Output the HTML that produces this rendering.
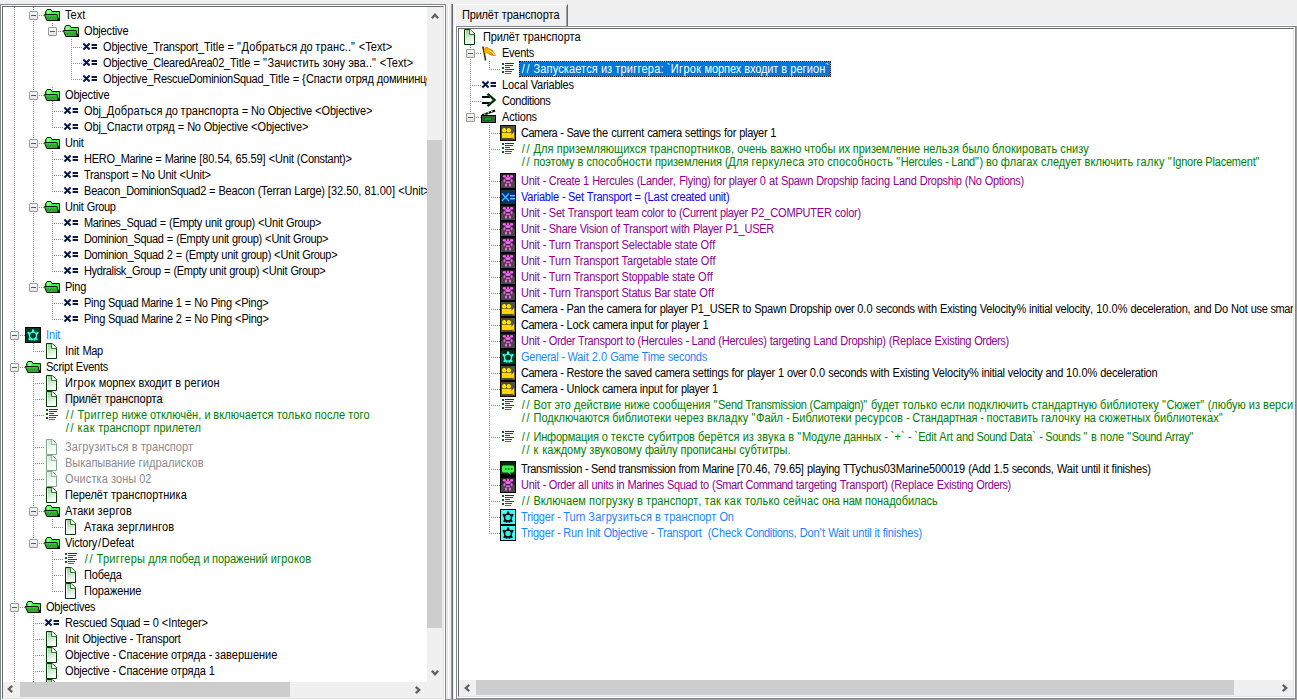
<!DOCTYPE html><html><head><meta charset="utf-8"><style>
*{margin:0;padding:0;box-sizing:border-box}
html,body{width:1297px;height:700px;overflow:hidden;background:#f0f0f0;font-family:"Liberation Sans",sans-serif;font-size:11px}
.abs{position:absolute}
.clip{position:absolute;overflow:hidden;background:#fff}
.ic{position:absolute;width:16px;height:16px}
.t{position:absolute;white-space:pre;line-height:16px;height:16px;font-size:12px;transform:scaleX(0.916667);transform-origin:0 0}
.t2{line-height:13px;height:32px;padding-top:2px}
.sel{color:#fff}
.selbg{position:absolute;background:#0078d7;border:1px solid #ff8a2a}
.selbg i{position:absolute;left:-1px;top:-1px;right:-1px;bottom:-1px;border:1px dotted #000}
.exp{position:absolute;width:9px;height:9px;border:1px solid #9a9a9a;border-radius:1px;background:linear-gradient(#fdfdfd,#e4e4e4)}
.exp i{position:absolute;left:1px;top:3px;width:5px;height:1px;background:#3c5cb4}
.dots{position:absolute;left:0;top:0}
.sb{position:absolute;background:#f0f0f0}
.thumb{position:absolute;background:#cdcdcd}
.arr{position:absolute;width:8px;height:8px}
</style></head><body><svg width="0" height="0" style="position:absolute"><defs><pattern id="pv" width="1" height="2" patternUnits="userSpaceOnUse"><rect x="0" y="1" width="1" height="1" fill="#8c8c8c"/></pattern><pattern id="ph0" width="2" height="1" patternUnits="userSpaceOnUse"><rect x="0" y="0" width="1" height="1" fill="#8c8c8c"/></pattern><pattern id="ph1" width="2" height="1" patternUnits="userSpaceOnUse"><rect x="1" y="0" width="1" height="1" fill="#8c8c8c"/></pattern></defs>
<symbol id="i-folder" viewBox="0 0 16 16">
  <path d="M1.5 5 L3 2.5 L7 2.5 L8 4.5 L15.5 4.5 L15.5 13.5 L3 13.5 Z" fill="#44f044" stroke="#002a00" stroke-width="1"/>
  <rect x="3" y="3" width="3.5" height="4" fill="#8cfa8c"/>
  <path d="M0.3 7.5 L13 7.5 L14.5 13.5 L2.8 13.5 Z" fill="#28a828" stroke="#001800" stroke-width="1"/>
  <rect x="1.5" y="8.2" width="11" height="1.2" fill="#4cc84c"/>
  <rect x="3.5" y="12.2" width="9" height="0.8" fill="#5a9a5a"/>
  <path d="M14 11.5 L16 11 L16 14 L13.5 14 Z" fill="#000"/>
</symbol>
<symbol id="i-var" viewBox="0 0 16 16">
  <path d="M1.4 4.6 L7.6 10.4 M7.6 4.6 L1.4 10.4" stroke="#0a1848" stroke-width="2.1"/>
  <rect x="9.6" y="5" width="5.4" height="2" fill="#0a1848"/>
  <rect x="9.6" y="8" width="5.4" height="2" fill="#0a1848"/>
</symbol>
<symbol id="i-doc" viewBox="0 0 16 16">
  <defs><linearGradient id="gdoc" x1="0" y1="0" x2="0.3" y2="1"><stop offset="0" stop-color="#8cc98c"/><stop offset="0.55" stop-color="#cfe8cf"/><stop offset="1" stop-color="#ffffff"/></linearGradient></defs>
  <path d="M2.5 0.5 L8.5 0.5 L12.5 4.5 L12.5 15.5 L2.5 15.5 Z" fill="url(#gdoc)" stroke="#003800" stroke-width="1"/>
  <path d="M3.5 1.5 L3.5 14.5 L11.5 14.5" fill="none" stroke="#fff" stroke-width="1"/>
  <path d="M8 1 L12 5 L8 5 Z" fill="#fff"/>
  <path d="M7.5 0.5 L7.5 5.5 L12.5 5.5" fill="none" stroke="#2a7f2a" stroke-width="1"/>
  <path d="M8.5 0.5 L12.5 4.5" fill="none" stroke="#fff" stroke-width="0.6" stroke-dasharray="0.7 0.7"/>
</symbol>
<symbol id="i-doc-dis" viewBox="0 0 16 16">
  <defs><linearGradient id="gdocd" x1="0" y1="0" x2="0.3" y2="1"><stop offset="0" stop-color="#cfe9d2"/><stop offset="1" stop-color="#ffffff"/></linearGradient></defs>
  <path d="M2.5 0.5 L8.5 0.5 L12.5 4.5 L12.5 15.5 L2.5 15.5 Z" fill="url(#gdocd)" stroke="#7ea68a" stroke-width="1"/>
  <path d="M3.5 1.5 L3.5 14.5 L11.5 14.5" fill="none" stroke="#fff" stroke-width="1"/>
  <path d="M8 1 L12 5 L8 5 Z" fill="#fff"/>
  <path d="M7.5 0.5 L7.5 5.5 L12.5 5.5" fill="none" stroke="#8cb498" stroke-width="1"/>
</symbol>
<symbol id="i-comment" viewBox="0 0 16 16">
  <rect x="2" y="2" width="2" height="2" fill="#0b5e0b"/>
  <rect x="2" y="6" width="2" height="2" fill="#0b5e0b"/>
  <rect x="2" y="10" width="2" height="2" fill="#0b5e0b"/>
  <rect x="5" y="2" width="9" height="1" fill="#064d06"/>
  <rect x="5" y="4" width="8" height="1" fill="#0a6a0a"/>
  <rect x="5" y="6" width="5" height="1" fill="#0a6a0a"/>
  <rect x="5" y="8" width="9" height="1" fill="#0a6a0a"/>
  <rect x="5" y="10" width="7" height="1" fill="#0d7a0d"/>
  <rect x="5" y="12" width="6" height="1" fill="#22a022"/>
</symbol>
<symbol id="i-init" viewBox="0 0 16 16">
  <rect x="0.5" y="0.5" width="15" height="15" fill="#073d1d" stroke="#000" stroke-width="1"/>
  <g fill="#40fbf4"><rect x="7" y="2.5" width="2.2" height="3"/>
    <path d="M2.2 5.6 L4.2 4.6 L5.6 7.2 L4 8.2 Z"/><path d="M13.8 5.6 L11.8 4.6 L10.4 7.2 L12 8.2 Z"/>
    <path d="M3 12.3 L5.2 13.6 L6.6 11.2 L4.8 10.2 Z"/><path d="M13 12.3 L10.8 13.6 L9.4 11.2 L11.2 10.2 Z"/>
    <rect x="6" y="12" width="1.5" height="1.6"/><rect x="8.5" y="12" width="1.5" height="1.6"/></g>
  <circle cx="8" cy="8.6" r="3.5" fill="#063a12" stroke="#40fbf4" stroke-width="1.4"/>
</symbol>
<symbol id="i-general" viewBox="0 0 16 16">
  <rect x="0.5" y="0.5" width="15" height="15" fill="#063d1f" stroke="#000" stroke-width="1"/>
  <rect x="1" y="1" width="14" height="3" fill="#052a12"/>
  <g fill="#40fbf4"><rect x="7" y="2.5" width="2.2" height="3"/>
    <path d="M2.2 5.6 L4.2 4.6 L5.6 7.2 L4 8.2 Z"/><path d="M13.8 5.6 L11.8 4.6 L10.4 7.2 L12 8.2 Z"/>
    <path d="M3 12.3 L5.2 13.6 L6.6 11.2 L4.8 10.2 Z"/><path d="M13 12.3 L10.8 13.6 L9.4 11.2 L11.2 10.2 Z"/>
    <rect x="6" y="12" width="1.5" height="1.6"/><rect x="8.5" y="12" width="1.5" height="1.6"/></g>
  <circle cx="8" cy="8.6" r="3.5" fill="#063a12" stroke="#40fbf4" stroke-width="1.4"/>
</symbol>
<symbol id="i-trigger" viewBox="0 0 16 16">
  <rect x="0.5" y="0.5" width="15" height="15" fill="#42fcf6" stroke="#000" stroke-width="1"/>
  <g fill="#000"><rect x="7" y="2.5" width="2.2" height="3"/>
    <path d="M2.2 5.6 L4.2 4.6 L5.6 7.2 L4 8.2 Z"/><path d="M13.8 5.6 L11.8 4.6 L10.4 7.2 L12 8.2 Z"/>
    <path d="M3 12.3 L5.2 13.6 L6.6 11.2 L4.8 10.2 Z"/><path d="M13 12.3 L10.8 13.6 L9.4 11.2 L11.2 10.2 Z"/>
    <rect x="6" y="12" width="1.5" height="1.6"/><rect x="8.5" y="12" width="1.5" height="1.6"/></g>
  <circle cx="8" cy="8.6" r="3.5" fill="#3ee6e0" stroke="#000" stroke-width="1.5"/>
</symbol>
<symbol id="i-flag" viewBox="0 0 16 16">
  <path d="M1.8 1.5 L2.6 5 L3.6 10 L4.6 15.5" stroke="#3a2200" stroke-width="1.5" fill="none"/>
  <path d="M2.6 3 L4.5 2.2 L7 2.4 L9 3.6 L11 5 L12.5 6 L12 7 L13.5 8.5 L15 10.5 L12.5 11 L10 10.3 L8 9.2 L6 8.6 L3.8 8.8 Z" fill="#f4b400"/>
  <path d="M8.2 3.4 L11 5 L12.5 6 L12 7 L13.5 8.5 L15 10.5 L12.5 11 L10 10.3 L8 9.2 L9 7 Z" fill="#e8860c"/>
  <path d="M8.5 5.5 L11.5 7.6 L13.5 10" stroke="#ffe9a0" stroke-width="1.1" fill="none"/>
  <path d="M4 3 L7 2.6" stroke="#d07010" stroke-width="0.8"/>
</symbol>
<symbol id="i-cond" viewBox="0 0 16 16">
  <rect x="1" y="3" width="8" height="2" fill="#000"/>
  <rect x="1" y="9" width="8" height="2" fill="#000"/>
  <path d="M6.5 0.8 L13.5 7 L6.5 13.2" fill="none" stroke="#062e06" stroke-width="2.4"/>
  <path d="M7.5 2.6 L11.6 7 L7.5 11.4" fill="none" stroke="#8fe08f" stroke-width="0.8" stroke-dasharray="1 1"/>
</symbol>
<symbol id="i-actions" viewBox="0 0 16 16">
  <path d="M1.2 6.2 L14 1.5" stroke="#000" stroke-width="2.2"/>
  <path d="M3.2 5.4 L4.6 4.9 M6.6 4.2 L8 3.7 M10 2.9 L11.4 2.4" stroke="#c8f8c8" stroke-width="1.3"/>
  <rect x="0.5" y="6.5" width="14" height="7" fill="#435a43" stroke="#000" stroke-width="1"/>
  <rect x="3" y="8" width="8" height="4" fill="#0b6e0b"/>
  <rect x="4" y="9" width="6" height="2" fill="#16a016"/>
</symbol>
<symbol id="i-camera" viewBox="0 0 16 16">
  <rect x="0.5" y="0.5" width="15" height="15" fill="#4b4a2a" stroke="#000010" stroke-width="1"/>
  <rect x="11" y="1" width="4" height="7" fill="#50505a"/>
  <circle cx="4.2" cy="5.3" r="2.2" fill="#ffe400"/>
  <circle cx="8.8" cy="5.3" r="2.2" fill="#ffe400"/>
  <rect x="2" y="7.8" width="9.5" height="5.2" fill="#ffd800"/>
  <path d="M11 10 L14.2 7 L14.2 14 L11 12.5 Z" fill="#ffd800"/>
  <path d="M12 12.5 L14.2 12 L14.2 14 Z" fill="#ff9800"/>
</symbol>
<symbol id="i-unit" viewBox="0 0 16 16">
  <rect x="0.5" y="0.5" width="15" height="15" fill="#2e242e" stroke="#000" stroke-width="1"/>
  <rect x="1" y="8" width="14" height="7" fill="#484648"/>
  <g fill="#f06af0">
    <ellipse cx="8" cy="3.1" rx="1.2" ry="1.3"/>
    <ellipse cx="4.4" cy="3.3" rx="1.5" ry="1.4"/><ellipse cx="11.6" cy="3.3" rx="1.5" ry="1.4"/>
    <path d="M5 4.3 L11 4.3 L10.2 7 L5.8 7 Z"/>
    <ellipse cx="4.3" cy="7.5" rx="1" ry="1.6"/><ellipse cx="11.7" cy="7.5" rx="1" ry="1.6"/>
    <path d="M5.8 8.4 L10.2 8.4 L9.6 10 L6.4 10 Z"/>
    <rect x="5" y="10.6" width="2" height="3" rx="0.9"/><rect x="9" y="10.6" width="2" height="3" rx="0.9"/>
  </g>
</symbol>
<symbol id="i-setvar" viewBox="0 0 16 16">
  <rect x="0.5" y="0.5" width="15" height="15" fill="#0b3550" stroke="#000" stroke-width="1"/>
  <rect x="1" y="4" width="14" height="8" fill="#0a2e90"/>
  <path d="M2 4.5 L9 12 M9 4.5 L2 12" stroke="#48c0ff" stroke-width="1.2"/>
  <rect x="10" y="6" width="5" height="1.4" fill="#60d0ff"/>
  <rect x="10" y="9" width="5" height="1.4" fill="#60d0ff"/>
</symbol>
<symbol id="i-transm" viewBox="0 0 16 16">
  <rect x="0.5" y="0.5" width="15" height="15" fill="#063d10" stroke="#000" stroke-width="1"/>
  <rect x="1" y="1" width="14" height="3" fill="#032a08"/>
  <rect x="1" y="13" width="14" height="2" fill="#000a00"/>
  <path d="M3 4.5 L13 4.5 L14 5.5 L14 10.5 L13 11.5 L10 11.5 L11 14 L8 11.5 L3 11.5 L2 10.5 L2 5.5 Z" fill="#3ef24c"/>
  <rect x="5" y="7.3" width="1.4" height="1.4" fill="#063d10"/>
  <rect x="8" y="7.3" width="1.4" height="1.4" fill="#063d10"/>
  <rect x="11" y="7.3" width="1.4" height="1.4" fill="#063d10"/>
</symbol>
</svg><div class="abs" style="left:0;top:4px;width:446px;height:697px;border:1px solid #828790"></div><div class="abs" style="left:1px;top:5px;width:444px;height:695px;border:1px solid #fff"></div><div class="abs" style="left:2px;top:6px;width:442px;height:693px;border-left:1px solid #696969;border-top:1px solid #696969;border-right:1px solid #e3e3e3;border-bottom:1px solid #e3e3e3"></div><div class="clip" style="left:3px;top:7px;width:424px;height:675px"><div class="abs" style="left:-3px;top:-7px;width:1297px;height:700px"><svg class="dots" width="1297" height="700"><g fill="url(#pv)"><rect x="14" y="7" width="1" height="691"/><rect x="33" y="7" width="1" height="281"/><rect x="33" y="343" width="1" height="9"/><rect x="33" y="375" width="1" height="169"/><rect x="33" y="615" width="1" height="83"/><rect x="52" y="23" width="1" height="9"/><rect x="52" y="87" width="1" height="41"/><rect x="52" y="151" width="1" height="41"/><rect x="52" y="215" width="1" height="57"/><rect x="52" y="295" width="1" height="25"/><rect x="52" y="519" width="1" height="9"/><rect x="52" y="551" width="1" height="41"/><rect x="71" y="39" width="1" height="41"/></g><g fill="url(#ph0)"><rect x="52" y="31" width="11" height="1"/><rect x="52" y="111" width="11" height="1"/><rect x="52" y="127" width="11" height="1"/><rect x="52" y="159" width="11" height="1"/><rect x="52" y="175" width="11" height="1"/><rect x="52" y="191" width="11" height="1"/><rect x="52" y="223" width="11" height="1"/><rect x="52" y="239" width="11" height="1"/><rect x="52" y="255" width="11" height="1"/><rect x="52" y="271" width="11" height="1"/><rect x="52" y="303" width="11" height="1"/><rect x="52" y="319" width="11" height="1"/><rect x="14" y="335" width="11" height="1"/><rect x="14" y="367" width="11" height="1"/><rect x="52" y="527" width="11" height="1"/><rect x="52" y="559" width="11" height="1"/><rect x="52" y="575" width="11" height="1"/><rect x="52" y="591" width="11" height="1"/><rect x="14" y="607" width="11" height="1"/></g><g fill="url(#ph1)"><rect x="33" y="15" width="11" height="1"/><rect x="71" y="47" width="11" height="1"/><rect x="71" y="63" width="11" height="1"/><rect x="71" y="79" width="11" height="1"/><rect x="33" y="95" width="11" height="1"/><rect x="33" y="143" width="11" height="1"/><rect x="33" y="207" width="11" height="1"/><rect x="33" y="287" width="11" height="1"/><rect x="33" y="351" width="11" height="1"/><rect x="33" y="383" width="11" height="1"/><rect x="33" y="399" width="11" height="1"/><rect x="33" y="415" width="11" height="1"/><rect x="33" y="447" width="11" height="1"/><rect x="33" y="463" width="11" height="1"/><rect x="33" y="479" width="11" height="1"/><rect x="33" y="495" width="11" height="1"/><rect x="33" y="511" width="11" height="1"/><rect x="33" y="543" width="11" height="1"/><rect x="33" y="623" width="11" height="1"/><rect x="33" y="639" width="11" height="1"/><rect x="33" y="655" width="11" height="1"/><rect x="33" y="671" width="11" height="1"/><rect x="33" y="687" width="11" height="1"/></g></svg><div class="abs" style="left:63px;top:391px;width:102px;height:16px;background:#f0f0f0"></div><div class="exp" style="left:29px;top:11px"><i></i></div><svg class="ic" style="left:44px;top:7px"><use href="#i-folder"/></svg><div class="t" style="left:65px;top:7px;color:#000000"><span style="letter-spacing:0.09px">Text</span></div><div class="exp" style="left:48px;top:27px"><i></i></div><svg class="ic" style="left:63px;top:23px"><use href="#i-folder"/></svg><div class="t" style="left:84px;top:23px;color:#000000"><span style="letter-spacing:-0.18px">Objective</span></div><svg class="ic" style="left:82px;top:39px"><use href="#i-var"/></svg><div class="t" style="left:103px;top:39px;color:#000000"><span style="letter-spacing:-0.18px">Objective</span><span style="letter-spacing:-0.13px">_</span><span style="letter-spacing:-0.24px">Transport</span><span style="letter-spacing:-0.13px">_</span><span style="letter-spacing:0.00px">Title</span><span style="letter-spacing:-0.02px"> </span><span style="letter-spacing:-0.03px">=</span><span style="letter-spacing:-0.02px"> </span><span style="letter-spacing:0.71px">&quot;</span><span style="letter-spacing:0.19px">Добраться</span><span style="letter-spacing:-0.02px"> </span><span style="letter-spacing:-0.32px">до</span><span style="letter-spacing:-0.02px"> </span><span style="letter-spacing:0.12px">транс</span><span style="letter-spacing:0.11px">..</span><span style="letter-spacing:0.71px">&quot;</span><span style="letter-spacing:-0.02px"> </span><span style="letter-spacing:0.01px">&lt;</span><span style="letter-spacing:0.09px">Text</span><span style="letter-spacing:0.01px">&gt;</span></div><svg class="ic" style="left:82px;top:55px"><use href="#i-var"/></svg><div class="t" style="left:103px;top:55px;color:#000000"><span style="letter-spacing:-0.18px">Objective</span><span style="letter-spacing:-0.13px">_</span><span style="letter-spacing:-0.28px">ClearedArea02</span><span style="letter-spacing:-0.13px">_</span><span style="letter-spacing:0.00px">Title</span><span style="letter-spacing:-0.02px"> </span><span style="letter-spacing:-0.03px">=</span><span style="letter-spacing:-0.02px"> </span><span style="letter-spacing:0.71px">&quot;</span><span style="letter-spacing:0.01px">Зачистить</span><span style="letter-spacing:-0.02px"> </span><span style="letter-spacing:-0.00px">зону</span><span style="letter-spacing:-0.02px"> </span><span style="letter-spacing:0.07px">эва</span><span style="letter-spacing:0.11px">..</span><span style="letter-spacing:0.71px">&quot;</span><span style="letter-spacing:-0.02px"> </span><span style="letter-spacing:0.01px">&lt;</span><span style="letter-spacing:0.09px">Text</span><span style="letter-spacing:0.01px">&gt;</span></div><svg class="ic" style="left:82px;top:71px"><use href="#i-var"/></svg><div class="t" style="left:103px;top:71px;color:#000000"><span style="letter-spacing:-0.18px">Objective</span><span style="letter-spacing:-0.13px">_</span><span style="letter-spacing:-0.33px">RescueDominionSquad</span><span style="letter-spacing:-0.13px">_</span><span style="letter-spacing:0.00px">Title</span><span style="letter-spacing:-0.02px"> </span><span style="letter-spacing:-0.03px">=</span><span style="letter-spacing:-0.02px"> </span><span style="letter-spacing:0.13px">{</span><span style="letter-spacing:-0.12px">Спасти</span><span style="letter-spacing:-0.02px"> </span><span style="letter-spacing:-0.11px">отряд</span><span style="letter-spacing:-0.02px"> </span><span style="letter-spacing:-0.21px">домининцев</span><span style="letter-spacing:0.13px">}</span></div><div class="exp" style="left:29px;top:91px"><i></i></div><svg class="ic" style="left:44px;top:87px"><use href="#i-folder"/></svg><div class="t" style="left:65px;top:87px;color:#000000"><span style="letter-spacing:-0.18px">Objective</span></div><svg class="ic" style="left:63px;top:103px"><use href="#i-var"/></svg><div class="t" style="left:84px;top:103px;color:#000000"><span style="letter-spacing:-0.14px">Obj</span><span style="letter-spacing:-0.13px">_</span><span style="letter-spacing:0.19px">Добраться</span><span style="letter-spacing:-0.02px"> </span><span style="letter-spacing:-0.32px">до</span><span style="letter-spacing:-0.02px"> </span><span style="letter-spacing:0.02px">транспорта</span><span style="letter-spacing:-0.02px"> </span><span style="letter-spacing:-0.03px">=</span><span style="letter-spacing:-0.02px"> </span><span style="letter-spacing:-0.33px">No</span><span style="letter-spacing:-0.02px"> </span><span style="letter-spacing:-0.18px">Objective</span><span style="letter-spacing:-0.02px"> </span><span style="letter-spacing:0.01px">&lt;</span><span style="letter-spacing:-0.18px">Objective</span><span style="letter-spacing:0.01px">&gt;</span></div><svg class="ic" style="left:63px;top:119px"><use href="#i-var"/></svg><div class="t" style="left:84px;top:119px;color:#000000"><span style="letter-spacing:-0.14px">Obj</span><span style="letter-spacing:-0.13px">_</span><span style="letter-spacing:-0.12px">Спасти</span><span style="letter-spacing:-0.02px"> </span><span style="letter-spacing:-0.11px">отряд</span><span style="letter-spacing:-0.02px"> </span><span style="letter-spacing:-0.03px">=</span><span style="letter-spacing:-0.02px"> </span><span style="letter-spacing:-0.33px">No</span><span style="letter-spacing:-0.02px"> </span><span style="letter-spacing:-0.18px">Objective</span><span style="letter-spacing:-0.02px"> </span><span style="letter-spacing:0.01px">&lt;</span><span style="letter-spacing:-0.18px">Objective</span><span style="letter-spacing:0.01px">&gt;</span></div><div class="exp" style="left:29px;top:139px"><i></i></div><svg class="ic" style="left:44px;top:135px"><use href="#i-folder"/></svg><div class="t" style="left:65px;top:135px;color:#000000"><span style="letter-spacing:-0.25px">Unit</span></div><svg class="ic" style="left:63px;top:151px"><use href="#i-var"/></svg><div class="t" style="left:84px;top:151px;color:#000000"><span style="letter-spacing:-0.28px">HERO</span><span style="letter-spacing:-0.13px">_</span><span style="letter-spacing:-0.40px">Marine</span><span style="letter-spacing:-0.02px"> </span><span style="letter-spacing:-0.03px">=</span><span style="letter-spacing:-0.02px"> </span><span style="letter-spacing:-0.40px">Marine</span><span style="letter-spacing:-0.02px"> </span><span style="letter-spacing:0.06px">[</span><span style="letter-spacing:-0.11px">80</span><span style="letter-spacing:0.11px">.</span><span style="letter-spacing:-0.24px">54</span><span style="letter-spacing:0.18px">,</span><span style="letter-spacing:-0.02px"> </span><span style="letter-spacing:-0.21px">65</span><span style="letter-spacing:0.11px">.</span><span style="letter-spacing:-0.21px">59</span><span style="letter-spacing:0.06px">]</span><span style="letter-spacing:-0.02px"> </span><span style="letter-spacing:0.01px">&lt;</span><span style="letter-spacing:-0.25px">Unit</span><span style="letter-spacing:-0.02px"> </span><span style="letter-spacing:-0.26px">(</span><span style="letter-spacing:-0.30px">Constant</span><span style="letter-spacing:-0.13px">)&gt;</span></div><svg class="ic" style="left:63px;top:167px"><use href="#i-var"/></svg><div class="t" style="left:84px;top:167px;color:#000000"><span style="letter-spacing:-0.24px">Transport</span><span style="letter-spacing:-0.02px"> </span><span style="letter-spacing:-0.03px">=</span><span style="letter-spacing:-0.02px"> </span><span style="letter-spacing:-0.33px">No</span><span style="letter-spacing:-0.02px"> </span><span style="letter-spacing:-0.25px">Unit</span><span style="letter-spacing:-0.02px"> </span><span style="letter-spacing:0.01px">&lt;</span><span style="letter-spacing:-0.25px">Unit</span><span style="letter-spacing:0.01px">&gt;</span></div><svg class="ic" style="left:63px;top:183px"><use href="#i-var"/></svg><div class="t" style="left:84px;top:183px;color:#000000"><span style="letter-spacing:-0.21px">Beacon</span><span style="letter-spacing:-0.13px">_</span><span style="letter-spacing:-0.36px">DominionSquad2</span><span style="letter-spacing:-0.02px"> </span><span style="letter-spacing:-0.03px">=</span><span style="letter-spacing:-0.02px"> </span><span style="letter-spacing:-0.21px">Beacon</span><span style="letter-spacing:-0.02px"> </span><span style="letter-spacing:-0.26px">(</span><span style="letter-spacing:-0.18px">Terran</span><span style="letter-spacing:-0.02px"> </span><span style="letter-spacing:-0.25px">Large</span><span style="letter-spacing:-0.26px">)</span><span style="letter-spacing:-0.02px"> </span><span style="letter-spacing:0.06px">[</span><span style="letter-spacing:-0.01px">32</span><span style="letter-spacing:0.11px">.</span><span style="letter-spacing:-0.15px">50</span><span style="letter-spacing:0.18px">,</span><span style="letter-spacing:-0.02px"> </span><span style="letter-spacing:-0.17px">81</span><span style="letter-spacing:0.11px">.</span><span style="letter-spacing:0.02px">00</span><span style="letter-spacing:0.06px">]</span><span style="letter-spacing:-0.02px"> </span><span style="letter-spacing:0.01px">&lt;</span><span style="letter-spacing:-0.25px">Unit</span><span style="letter-spacing:0.01px">&gt;</span></div><div class="exp" style="left:29px;top:203px"><i></i></div><svg class="ic" style="left:44px;top:199px"><use href="#i-folder"/></svg><div class="t" style="left:65px;top:199px;color:#000000"><span style="letter-spacing:-0.25px">Unit</span><span style="letter-spacing:-0.02px"> </span><span style="letter-spacing:-0.37px">Group</span></div><svg class="ic" style="left:63px;top:215px"><use href="#i-var"/></svg><div class="t" style="left:84px;top:215px;color:#000000"><span style="letter-spacing:-0.41px">Marines</span><span style="letter-spacing:-0.13px">_</span><span style="letter-spacing:-0.38px">Squad</span><span style="letter-spacing:-0.02px"> </span><span style="letter-spacing:-0.03px">=</span><span style="letter-spacing:-0.02px"> </span><span style="letter-spacing:-0.26px">(</span><span style="letter-spacing:-0.37px">Empty</span><span style="letter-spacing:-0.02px"> </span><span style="letter-spacing:-0.24px">unit</span><span style="letter-spacing:-0.02px"> </span><span style="letter-spacing:-0.37px">group</span><span style="letter-spacing:-0.26px">)</span><span style="letter-spacing:-0.02px"> </span><span style="letter-spacing:0.01px">&lt;</span><span style="letter-spacing:-0.25px">Unit</span><span style="letter-spacing:-0.02px"> </span><span style="letter-spacing:-0.37px">Group</span><span style="letter-spacing:0.01px">&gt;</span></div><svg class="ic" style="left:63px;top:231px"><use href="#i-var"/></svg><div class="t" style="left:84px;top:231px;color:#000000"><span style="letter-spacing:-0.40px">Dominion</span><span style="letter-spacing:-0.13px">_</span><span style="letter-spacing:-0.38px">Squad</span><span style="letter-spacing:-0.02px"> </span><span style="letter-spacing:-0.03px">=</span><span style="letter-spacing:-0.02px"> </span><span style="letter-spacing:-0.26px">(</span><span style="letter-spacing:-0.37px">Empty</span><span style="letter-spacing:-0.02px"> </span><span style="letter-spacing:-0.24px">unit</span><span style="letter-spacing:-0.02px"> </span><span style="letter-spacing:-0.37px">group</span><span style="letter-spacing:-0.26px">)</span><span style="letter-spacing:-0.02px"> </span><span style="letter-spacing:0.01px">&lt;</span><span style="letter-spacing:-0.25px">Unit</span><span style="letter-spacing:-0.02px"> </span><span style="letter-spacing:-0.37px">Group</span><span style="letter-spacing:0.01px">&gt;</span></div><svg class="ic" style="left:63px;top:247px"><use href="#i-var"/></svg><div class="t" style="left:84px;top:247px;color:#000000"><span style="letter-spacing:-0.40px">Dominion</span><span style="letter-spacing:-0.13px">_</span><span style="letter-spacing:-0.38px">Squad</span><span style="letter-spacing:-0.02px"> </span><span style="letter-spacing:0.01px">2</span><span style="letter-spacing:-0.02px"> </span><span style="letter-spacing:-0.03px">=</span><span style="letter-spacing:-0.02px"> </span><span style="letter-spacing:-0.26px">(</span><span style="letter-spacing:-0.37px">Empty</span><span style="letter-spacing:-0.02px"> </span><span style="letter-spacing:-0.24px">unit</span><span style="letter-spacing:-0.02px"> </span><span style="letter-spacing:-0.37px">group</span><span style="letter-spacing:-0.26px">)</span><span style="letter-spacing:-0.02px"> </span><span style="letter-spacing:0.01px">&lt;</span><span style="letter-spacing:-0.25px">Unit</span><span style="letter-spacing:-0.02px"> </span><span style="letter-spacing:-0.37px">Group</span><span style="letter-spacing:0.01px">&gt;</span></div><svg class="ic" style="left:63px;top:263px"><use href="#i-var"/></svg><div class="t" style="left:84px;top:263px;color:#000000"><span style="letter-spacing:-0.39px">Hydralisk</span><span style="letter-spacing:-0.13px">_</span><span style="letter-spacing:-0.37px">Group</span><span style="letter-spacing:-0.02px"> </span><span style="letter-spacing:-0.03px">=</span><span style="letter-spacing:-0.02px"> </span><span style="letter-spacing:-0.26px">(</span><span style="letter-spacing:-0.37px">Empty</span><span style="letter-spacing:-0.02px"> </span><span style="letter-spacing:-0.24px">unit</span><span style="letter-spacing:-0.02px"> </span><span style="letter-spacing:-0.37px">group</span><span style="letter-spacing:-0.26px">)</span><span style="letter-spacing:-0.02px"> </span><span style="letter-spacing:0.01px">&lt;</span><span style="letter-spacing:-0.25px">Unit</span><span style="letter-spacing:-0.02px"> </span><span style="letter-spacing:-0.37px">Group</span><span style="letter-spacing:0.01px">&gt;</span></div><div class="exp" style="left:29px;top:283px"><i></i></div><svg class="ic" style="left:44px;top:279px"><use href="#i-folder"/></svg><div class="t" style="left:65px;top:279px;color:#000000"><span style="letter-spacing:-0.27px">Ping</span></div><svg class="ic" style="left:63px;top:295px"><use href="#i-var"/></svg><div class="t" style="left:84px;top:295px;color:#000000"><span style="letter-spacing:-0.27px">Ping</span><span style="letter-spacing:-0.02px"> </span><span style="letter-spacing:-0.38px">Squad</span><span style="letter-spacing:-0.02px"> </span><span style="letter-spacing:-0.40px">Marine</span><span style="letter-spacing:-0.02px"> </span><span style="letter-spacing:-0.11px">1</span><span style="letter-spacing:-0.02px"> </span><span style="letter-spacing:-0.03px">=</span><span style="letter-spacing:-0.02px"> </span><span style="letter-spacing:-0.33px">No</span><span style="letter-spacing:-0.02px"> </span><span style="letter-spacing:-0.27px">Ping</span><span style="letter-spacing:-0.02px"> </span><span style="letter-spacing:0.01px">&lt;</span><span style="letter-spacing:-0.27px">Ping</span><span style="letter-spacing:0.01px">&gt;</span></div><svg class="ic" style="left:63px;top:311px"><use href="#i-var"/></svg><div class="t" style="left:84px;top:311px;color:#000000"><span style="letter-spacing:-0.27px">Ping</span><span style="letter-spacing:-0.02px"> </span><span style="letter-spacing:-0.38px">Squad</span><span style="letter-spacing:-0.02px"> </span><span style="letter-spacing:-0.40px">Marine</span><span style="letter-spacing:-0.02px"> </span><span style="letter-spacing:0.01px">2</span><span style="letter-spacing:-0.02px"> </span><span style="letter-spacing:-0.03px">=</span><span style="letter-spacing:-0.02px"> </span><span style="letter-spacing:-0.33px">No</span><span style="letter-spacing:-0.02px"> </span><span style="letter-spacing:-0.27px">Ping</span><span style="letter-spacing:-0.02px"> </span><span style="letter-spacing:0.01px">&lt;</span><span style="letter-spacing:-0.27px">Ping</span><span style="letter-spacing:0.01px">&gt;</span></div><div class="exp" style="left:10px;top:331px"><i></i></div><svg class="ic" style="left:25px;top:327px"><use href="#i-init"/></svg><div class="t" style="left:46px;top:327px;color:#1a84ff"><span style="letter-spacing:-0.09px">Init</span></div><svg class="ic" style="left:44px;top:343px"><use href="#i-doc"/></svg><div class="t" style="left:65px;top:343px;color:#000000"><span style="letter-spacing:-0.09px">Init</span><span style="letter-spacing:-0.02px"> </span><span style="letter-spacing:-0.41px">Map</span></div><div class="exp" style="left:10px;top:363px"><i></i></div><svg class="ic" style="left:25px;top:359px"><use href="#i-folder"/></svg><div class="t" style="left:46px;top:359px;color:#000000"><span style="letter-spacing:-0.24px">Script</span><span style="letter-spacing:-0.02px"> </span><span style="letter-spacing:-0.28px">Events</span></div><svg class="ic" style="left:44px;top:375px"><use href="#i-doc"/></svg><div class="t" style="left:65px;top:375px;color:#000000"><span style="letter-spacing:0.35px">Игрок</span><span style="letter-spacing:-0.02px"> </span><span style="letter-spacing:-0.07px">морпех</span><span style="letter-spacing:-0.02px"> </span><span style="letter-spacing:-0.16px">входит</span><span style="letter-spacing:-0.02px"> </span><span style="letter-spacing:0.10px">в</span><span style="letter-spacing:-0.02px"> </span><span style="letter-spacing:0.13px">регион</span></div><svg class="ic" style="left:44px;top:391px"><use href="#i-doc"/></svg><div class="t" style="left:65px;top:391px;color:#000000"><span style="letter-spacing:-0.21px">Прилёт</span><span style="letter-spacing:-0.02px"> </span><span style="letter-spacing:0.02px">транспорта</span></div><svg class="ic" style="left:44px;top:407px"><use href="#i-comment"/></svg><div class="t t2" style="left:65px;top:407px;color:#008000"><span style="letter-spacing:1.82px;margin-left:0.91px;margin-right:-0.91px">//</span><span style="letter-spacing:-0.02px"> </span><span style="letter-spacing:0.40px">Триггер</span><span style="letter-spacing:-0.02px"> </span><span style="letter-spacing:-0.06px">ниже</span><span style="letter-spacing:-0.02px"> </span><span style="letter-spacing:-0.01px">отключён</span><span style="letter-spacing:0.18px">,</span><span style="letter-spacing:-0.02px"> </span><span style="letter-spacing:-0.40px">и</span><span style="letter-spacing:-0.02px"> </span><span style="letter-spacing:0.13px">включается</span><span style="letter-spacing:-0.02px"> </span><span style="letter-spacing:0.18px">только</span><span style="letter-spacing:-0.02px"> </span><span style="letter-spacing:0.08px">после</span><span style="letter-spacing:-0.02px"> </span><span style="letter-spacing:0.13px">того</span><br><span style="letter-spacing:1.82px;margin-left:0.91px;margin-right:-0.91px">//</span><span style="letter-spacing:-0.02px"> </span><span style="letter-spacing:0.60px">как</span><span style="letter-spacing:-0.02px"> </span><span style="letter-spacing:0.05px">транспорт</span><span style="letter-spacing:-0.02px"> </span><span style="letter-spacing:-0.01px">прилетел</span></div><svg class="ic" style="left:44px;top:439px"><use href="#i-doc-dis"/></svg><div class="t" style="left:65px;top:439px;color:#8a8a8a"><span style="letter-spacing:0.20px">Загрузиться</span><span style="letter-spacing:-0.02px"> </span><span style="letter-spacing:0.10px">в</span><span style="letter-spacing:-0.02px"> </span><span style="letter-spacing:0.05px">транспорт</span></div><svg class="ic" style="left:44px;top:455px"><use href="#i-doc-dis"/></svg><div class="t" style="left:65px;top:455px;color:#8a8a8a"><span style="letter-spacing:0.00px">Выкапывание</span><span style="letter-spacing:-0.02px"> </span><span style="letter-spacing:0.14px">гидралисков</span></div><svg class="ic" style="left:44px;top:471px"><use href="#i-doc-dis"/></svg><div class="t" style="left:65px;top:471px;color:#8a8a8a"><span style="letter-spacing:0.14px">Очистка</span><span style="letter-spacing:-0.02px"> </span><span style="letter-spacing:0.01px">зоны</span><span style="letter-spacing:-0.02px"> </span><span style="letter-spacing:0.01px">02</span></div><svg class="ic" style="left:44px;top:487px"><use href="#i-doc"/></svg><div class="t" style="left:65px;top:487px;color:#000000"><span style="letter-spacing:-0.10px">Перелёт</span><span style="letter-spacing:-0.02px"> </span><span style="letter-spacing:0.06px">транспортника</span></div><div class="exp" style="left:29px;top:507px"><i></i></div><svg class="ic" style="left:44px;top:503px"><use href="#i-folder"/></svg><div class="t" style="left:65px;top:503px;color:#000000"><span style="letter-spacing:0.09px">Атаки</span><span style="letter-spacing:-0.02px"> </span><span style="letter-spacing:0.28px">зергов</span></div><svg class="ic" style="left:63px;top:519px"><use href="#i-doc"/></svg><div class="t" style="left:84px;top:519px;color:#000000"><span style="letter-spacing:0.12px">Атака</span><span style="letter-spacing:-0.02px"> </span><span style="letter-spacing:0.24px">зерглингов</span></div><div class="exp" style="left:29px;top:539px"><i></i></div><svg class="ic" style="left:44px;top:535px"><use href="#i-folder"/></svg><div class="t" style="left:65px;top:535px;color:#000000"><span style="letter-spacing:-0.21px">Victory</span><span style="letter-spacing:1.82px;margin-left:0.91px;margin-right:-0.91px">/</span><span style="letter-spacing:-0.05px">Defeat</span></div><svg class="ic" style="left:63px;top:551px"><use href="#i-comment"/></svg><div class="t" style="left:84px;top:551px;color:#008000"><span style="letter-spacing:1.82px;margin-left:0.91px;margin-right:-0.91px">//</span><span style="letter-spacing:-0.02px"> </span><span style="letter-spacing:0.34px">Триггеры</span><span style="letter-spacing:-0.02px"> </span><span style="letter-spacing:-0.15px">для</span><span style="letter-spacing:-0.02px"> </span><span style="letter-spacing:-0.04px">побед</span><span style="letter-spacing:-0.02px"> </span><span style="letter-spacing:-0.40px">и</span><span style="letter-spacing:-0.02px"> </span><span style="letter-spacing:-0.07px">поражений</span><span style="letter-spacing:-0.02px"> </span><span style="letter-spacing:0.23px">игроков</span></div><svg class="ic" style="left:63px;top:567px"><use href="#i-doc"/></svg><div class="t" style="left:84px;top:567px;color:#000000"><span style="letter-spacing:-0.14px">Победа</span></div><svg class="ic" style="left:63px;top:583px"><use href="#i-doc"/></svg><div class="t" style="left:84px;top:583px;color:#000000"><span style="letter-spacing:-0.10px">Поражение</span></div><div class="exp" style="left:10px;top:603px"><i></i></div><svg class="ic" style="left:25px;top:599px"><use href="#i-folder"/></svg><div class="t" style="left:46px;top:599px;color:#000000"><span style="letter-spacing:-0.21px">Objectives</span></div><svg class="ic" style="left:44px;top:615px"><use href="#i-var"/></svg><div class="t" style="left:65px;top:615px;color:#000000"><span style="letter-spacing:-0.22px">Rescued</span><span style="letter-spacing:-0.02px"> </span><span style="letter-spacing:-0.38px">Squad</span><span style="letter-spacing:-0.02px"> </span><span style="letter-spacing:-0.03px">=</span><span style="letter-spacing:-0.02px"> </span><span style="letter-spacing:0.02px">0</span><span style="letter-spacing:-0.02px"> </span><span style="letter-spacing:0.01px">&lt;</span><span style="letter-spacing:-0.16px">Integer</span><span style="letter-spacing:0.01px">&gt;</span></div><svg class="ic" style="left:44px;top:631px"><use href="#i-doc"/></svg><div class="t" style="left:65px;top:631px;color:#000000"><span style="letter-spacing:-0.09px">Init</span><span style="letter-spacing:-0.02px"> </span><span style="letter-spacing:-0.18px">Objective</span><span style="letter-spacing:-0.02px"> </span><span style="letter-spacing:-0.71px">-</span><span style="letter-spacing:-0.02px"> </span><span style="letter-spacing:-0.24px">Transport</span></div><svg class="ic" style="left:44px;top:647px"><use href="#i-doc"/></svg><div class="t" style="left:65px;top:647px;color:#000000"><span style="letter-spacing:-0.18px">Objective</span><span style="letter-spacing:-0.02px"> </span><span style="letter-spacing:-0.71px">-</span><span style="letter-spacing:-0.02px"> </span><span style="letter-spacing:-0.07px">Спасение</span><span style="letter-spacing:-0.02px"> </span><span style="letter-spacing:-0.13px">отряда</span><span style="letter-spacing:-0.02px"> </span><span style="letter-spacing:-0.71px">-</span><span style="letter-spacing:-0.02px"> </span><span style="letter-spacing:0.02px">завершение</span></div><svg class="ic" style="left:44px;top:663px"><use href="#i-doc"/></svg><div class="t" style="left:65px;top:663px;color:#000000"><span style="letter-spacing:-0.18px">Objective</span><span style="letter-spacing:-0.02px"> </span><span style="letter-spacing:-0.71px">-</span><span style="letter-spacing:-0.02px"> </span><span style="letter-spacing:-0.07px">Спасение</span><span style="letter-spacing:-0.02px"> </span><span style="letter-spacing:-0.13px">отряда</span><span style="letter-spacing:-0.02px"> </span><span style="letter-spacing:-0.11px">1</span></div><svg class="ic" style="left:44px;top:679px"><use href="#i-doc"/></svg><div class="t" style="left:65px;top:679px;color:#000000"><span style="letter-spacing:-0.18px">Objective</span><span style="letter-spacing:-0.02px"> </span><span style="letter-spacing:-0.71px">-</span><span style="letter-spacing:-0.02px"> </span><span style="letter-spacing:-0.07px">Спасение</span><span style="letter-spacing:-0.02px"> </span><span style="letter-spacing:-0.13px">отряда</span><span style="letter-spacing:-0.02px"> </span><span style="letter-spacing:0.01px">2</span></div></div></div><div class="sb" style="left:427px;top:7px;width:16px;height:675px"></div><div class="thumb" style="left:427px;top:140px;width:15px;height:488px"></div><svg class="abs" style="left:431px;top:12px" width="8" height="8"><path d="M0.9 6.2 L4 2.8 L7.1 6.2" fill="none" stroke="#606060" stroke-width="2.3"/></svg><svg class="abs" style="left:431px;top:669px" width="8" height="8"><path d="M0.9 1.8 L4 5.2 L7.1 1.8" fill="none" stroke="#606060" stroke-width="2.3"/></svg><div class="sb" style="left:3px;top:682px;width:440px;height:16px"></div><div class="thumb" style="left:20px;top:682px;width:270px;height:15px"></div><svg class="abs" style="left:6px;top:685px" width="8" height="8"><path d="M6.2 0.9 L2.8 4 L6.2 7.1" fill="none" stroke="#606060" stroke-width="2.3"/></svg><svg class="abs" style="left:414px;top:686px" width="8" height="8"><path d="M1.8 0.9 L5.2 4 L1.8 7.1" fill="none" stroke="#606060" stroke-width="2.3"/></svg><div class="abs" style="left:447px;top:5px;width:1px;height:695px;background:#e3e3e3"></div><div class="abs" style="left:448px;top:5px;width:1px;height:695px;background:#fff"></div><div class="abs" style="left:451px;top:4px;width:1px;height:696px;background:#a0a0a0"></div><div class="abs" style="left:452px;top:4px;width:1px;height:696px;background:#696969"></div><div class="abs" style="left:454px;top:26px;width:2px;height:674px;background:#fff"></div><div class="abs" style="left:446px;top:699px;width:10px;height:1px;background:#a0a0a0"></div><div class="abs" style="left:455px;top:4px;width:113px;height:23px;border-left:1px solid #fff;border-top:1px solid #fff;border-right:1px solid #696969;background:#f0f0f0"></div><div class="abs" style="left:566px;top:6px;width:1px;height:20px;background:#a0a0a0"></div><div class="t" style="left:462px;top:7px;color:#000"><span style="letter-spacing:-0.21px">Прилёт</span><span style="letter-spacing:-0.02px"> </span><span style="letter-spacing:0.02px">транспорта</span></div><div class="abs" style="left:568px;top:25px;width:728px;height:1px;background:#fff"></div><div class="abs" style="left:456px;top:26px;width:840px;height:673px;border:1px solid #828790"></div><div class="abs" style="left:457px;top:27px;width:838px;height:671px;border:1px solid #fff"></div><div class="abs" style="left:458px;top:28px;width:836px;height:669px;border-left:1px solid #696969;border-top:1px solid #696969;border-right:1px solid #e3e3e3;border-bottom:1px solid #e3e3e3"></div><div class="abs" style="left:1296px;top:26px;width:1px;height:674px;background:#a0a0a0"></div><div class="abs" style="left:456px;top:699px;width:841px;height:1px;background:#a0a0a0"></div><div class="clip" style="left:459px;top:29px;width:834px;height:651px"><div class="abs" style="left:-459px;top:-29px;width:1297px;height:700px"><svg class="dots" width="1297" height="700"><g fill="url(#pv)"><rect x="470" y="45" width="1" height="73"/><rect x="489" y="61" width="1" height="9"/><rect x="489" y="125" width="1" height="409"/></g><g fill="url(#ph0)"><rect x="470" y="53" width="11" height="1"/><rect x="470" y="85" width="11" height="1"/><rect x="470" y="101" width="11" height="1"/><rect x="470" y="117" width="11" height="1"/></g><g fill="url(#ph1)"><rect x="489" y="69" width="11" height="1"/><rect x="489" y="133" width="11" height="1"/><rect x="489" y="149" width="11" height="1"/><rect x="489" y="181" width="11" height="1"/><rect x="489" y="197" width="11" height="1"/><rect x="489" y="213" width="11" height="1"/><rect x="489" y="229" width="11" height="1"/><rect x="489" y="245" width="11" height="1"/><rect x="489" y="261" width="11" height="1"/><rect x="489" y="277" width="11" height="1"/><rect x="489" y="293" width="11" height="1"/><rect x="489" y="309" width="11" height="1"/><rect x="489" y="325" width="11" height="1"/><rect x="489" y="341" width="11" height="1"/><rect x="489" y="357" width="11" height="1"/><rect x="489" y="373" width="11" height="1"/><rect x="489" y="389" width="11" height="1"/><rect x="489" y="405" width="11" height="1"/><rect x="489" y="437" width="11" height="1"/><rect x="489" y="469" width="11" height="1"/><rect x="489" y="485" width="11" height="1"/><rect x="489" y="501" width="11" height="1"/><rect x="489" y="517" width="11" height="1"/><rect x="489" y="533" width="11" height="1"/></g></svg><svg class="ic" style="left:462px;top:29px"><use href="#i-doc"/></svg><div class="t" style="left:483px;top:29px;color:#000000"><span style="letter-spacing:-0.21px">Прилёт</span><span style="letter-spacing:-0.02px"> </span><span style="letter-spacing:0.02px">транспорта</span></div><div class="exp" style="left:466px;top:49px"><i></i></div><svg class="ic" style="left:481px;top:45px"><use href="#i-flag"/></svg><div class="t" style="left:502px;top:45px;color:#000000"><span style="letter-spacing:-0.28px">Events</span></div><svg class="ic" style="left:500px;top:61px"><use href="#i-comment"/></svg><div class="selbg" style="left:519px;top:61px;width:312px;height:16px"><i></i></div><div class="t sel" style="left:521px;top:61px"><span style="letter-spacing:1.82px;margin-left:0.91px;margin-right:-0.91px">//</span><span style="letter-spacing:-0.02px"> </span><span style="letter-spacing:0.15px">Запускается</span><span style="letter-spacing:-0.02px"> </span><span style="letter-spacing:-0.01px">из</span><span style="letter-spacing:-0.02px"> </span><span style="letter-spacing:0.26px">триггера</span><span style="letter-spacing:0.17px">:</span><span style="letter-spacing:-0.02px"> </span><span style="letter-spacing:0.38px">`</span><span style="letter-spacing:0.35px">Игрок</span><span style="letter-spacing:-0.02px"> </span><span style="letter-spacing:-0.07px">морпех</span><span style="letter-spacing:-0.02px"> </span><span style="letter-spacing:-0.16px">входит</span><span style="letter-spacing:-0.02px"> </span><span style="letter-spacing:0.10px">в</span><span style="letter-spacing:-0.02px"> </span><span style="letter-spacing:0.13px">регион</span><span style="letter-spacing:0.38px">`</span></div><svg class="ic" style="left:481px;top:77px"><use href="#i-var"/></svg><div class="t" style="left:502px;top:77px;color:#000000"><span style="letter-spacing:-0.13px">Local</span><span style="letter-spacing:-0.02px"> </span><span style="letter-spacing:-0.26px">Variables</span></div><svg class="ic" style="left:481px;top:93px"><use href="#i-cond"/></svg><div class="t" style="left:502px;top:93px;color:#000000"><span style="letter-spacing:-0.38px">Conditions</span></div><div class="exp" style="left:466px;top:113px"><i></i></div><svg class="ic" style="left:481px;top:109px"><use href="#i-actions"/></svg><div class="t" style="left:502px;top:109px;color:#000000"><span style="letter-spacing:-0.18px">Actions</span></div><svg class="ic" style="left:500px;top:125px"><use href="#i-camera"/></svg><div class="t" style="left:521px;top:125px;color:#000000"><span style="letter-spacing:-0.52px">Camera</span><span style="letter-spacing:-0.02px"> </span><span style="letter-spacing:-0.71px">-</span><span style="letter-spacing:-0.02px"> </span><span style="letter-spacing:-0.45px">Save</span><span style="letter-spacing:-0.02px"> </span><span style="letter-spacing:-0.00px">the</span><span style="letter-spacing:-0.02px"> </span><span style="letter-spacing:-0.21px">current</span><span style="letter-spacing:-0.02px"> </span><span style="letter-spacing:-0.37px">camera</span><span style="letter-spacing:-0.02px"> </span><span style="letter-spacing:-0.26px">settings</span><span style="letter-spacing:-0.02px"> </span><span style="letter-spacing:-0.21px">for</span><span style="letter-spacing:-0.02px"> </span><span style="letter-spacing:-0.36px">player</span><span style="letter-spacing:-0.02px"> </span><span style="letter-spacing:-0.11px">1</span></div><svg class="ic" style="left:500px;top:141px"><use href="#i-comment"/></svg><div class="t t2" style="left:521px;top:141px;color:#008000"><span style="letter-spacing:1.82px;margin-left:0.91px;margin-right:-0.91px">//</span><span style="letter-spacing:-0.02px"> </span><span style="letter-spacing:0.13px">Для</span><span style="letter-spacing:-0.02px"> </span><span style="letter-spacing:-0.01px">приземляющихся</span><span style="letter-spacing:-0.02px"> </span><span style="letter-spacing:0.07px">транспортников</span><span style="letter-spacing:0.18px">,</span><span style="letter-spacing:-0.02px"> </span><span style="letter-spacing:0.07px">очень</span><span style="letter-spacing:-0.02px"> </span><span style="letter-spacing:-0.07px">важно</span><span style="letter-spacing:-0.02px"> </span><span style="letter-spacing:0.01px">чтобы</span><span style="letter-spacing:-0.02px"> </span><span style="letter-spacing:-0.17px">их</span><span style="letter-spacing:-0.02px"> </span><span style="letter-spacing:-0.04px">приземление</span><span style="letter-spacing:-0.02px"> </span><span style="letter-spacing:0.16px">нельзя</span><span style="letter-spacing:-0.02px"> </span><span style="letter-spacing:0.04px">было</span><span style="letter-spacing:-0.02px"> </span><span style="letter-spacing:0.11px">блокировать</span><span style="letter-spacing:-0.02px"> </span><span style="letter-spacing:0.10px">снизу</span><br><span style="letter-spacing:1.82px;margin-left:0.91px;margin-right:-0.91px">//</span><span style="letter-spacing:-0.02px"> </span><span style="letter-spacing:-0.13px">поэтому</span><span style="letter-spacing:-0.02px"> </span><span style="letter-spacing:0.10px">в</span><span style="letter-spacing:-0.02px"> </span><span style="letter-spacing:0.10px">способности</span><span style="letter-spacing:-0.02px"> </span><span style="letter-spacing:-0.06px">приземления</span><span style="letter-spacing:-0.02px"> </span><span style="letter-spacing:-0.26px">(</span><span style="letter-spacing:0.13px">Для</span><span style="letter-spacing:-0.02px"> </span><span style="letter-spacing:0.32px">геркулеса</span><span style="letter-spacing:-0.02px"> </span><span style="letter-spacing:0.02px">это</span><span style="letter-spacing:-0.02px"> </span><span style="letter-spacing:0.19px">способность</span><span style="letter-spacing:-0.02px"> </span><span style="letter-spacing:0.71px">&quot;</span><span style="letter-spacing:-0.27px">Hercules</span><span style="letter-spacing:-0.02px"> </span><span style="letter-spacing:-0.71px">-</span><span style="letter-spacing:-0.02px"> </span><span style="letter-spacing:-0.22px">Land</span><span style="letter-spacing:0.71px">&quot;</span><span style="letter-spacing:-0.26px">)</span><span style="letter-spacing:-0.02px"> </span><span style="letter-spacing:-0.08px">во</span><span style="letter-spacing:-0.02px"> </span><span style="letter-spacing:0.05px">флагах</span><span style="letter-spacing:-0.02px"> </span><span style="letter-spacing:0.03px">следует</span><span style="letter-spacing:-0.02px"> </span><span style="letter-spacing:0.13px">включить</span><span style="letter-spacing:-0.02px"> </span><span style="letter-spacing:0.36px">галку</span><span style="letter-spacing:-0.02px"> </span><span style="letter-spacing:0.71px">&quot;</span><span style="letter-spacing:-0.24px">Ignore</span><span style="letter-spacing:-0.02px"> </span><span style="letter-spacing:-0.22px">Placement</span><span style="letter-spacing:0.71px">&quot;</span></div><svg class="ic" style="left:500px;top:173px"><use href="#i-unit"/></svg><div class="t" style="left:521px;top:173px;color:#8e008e"><span style="letter-spacing:-0.25px">Unit</span><span style="letter-spacing:-0.02px"> </span><span style="letter-spacing:-0.71px">-</span><span style="letter-spacing:-0.02px"> </span><span style="letter-spacing:-0.32px">Create</span><span style="letter-spacing:-0.02px"> </span><span style="letter-spacing:-0.11px">1</span><span style="letter-spacing:-0.02px"> </span><span style="letter-spacing:-0.27px">Hercules</span><span style="letter-spacing:-0.02px"> </span><span style="letter-spacing:-0.26px">(</span><span style="letter-spacing:-0.27px">Lander</span><span style="letter-spacing:0.18px">,</span><span style="letter-spacing:-0.02px"> </span><span style="letter-spacing:-0.27px">Flying</span><span style="letter-spacing:-0.26px">)</span><span style="letter-spacing:-0.02px"> </span><span style="letter-spacing:-0.21px">for</span><span style="letter-spacing:-0.02px"> </span><span style="letter-spacing:-0.36px">player</span><span style="letter-spacing:-0.02px"> </span><span style="letter-spacing:0.02px">0</span><span style="letter-spacing:-0.02px"> </span><span style="letter-spacing:-0.19px">at</span><span style="letter-spacing:-0.02px"> </span><span style="letter-spacing:-0.32px">Spawn</span><span style="letter-spacing:-0.02px"> </span><span style="letter-spacing:-0.28px">Dropship</span><span style="letter-spacing:-0.02px"> </span><span style="letter-spacing:-0.10px">facing</span><span style="letter-spacing:-0.02px"> </span><span style="letter-spacing:-0.22px">Land</span><span style="letter-spacing:-0.02px"> </span><span style="letter-spacing:-0.28px">Dropship</span><span style="letter-spacing:-0.02px"> </span><span style="letter-spacing:-0.26px">(</span><span style="letter-spacing:-0.33px">No</span><span style="letter-spacing:-0.02px"> </span><span style="letter-spacing:-0.33px">Options</span><span style="letter-spacing:-0.26px">)</span></div><svg class="ic" style="left:500px;top:189px"><use href="#i-setvar"/></svg><div class="t" style="left:521px;top:189px;color:#0a00ff"><span style="letter-spacing:-0.23px">Variable</span><span style="letter-spacing:-0.02px"> </span><span style="letter-spacing:-0.71px">-</span><span style="letter-spacing:-0.02px"> </span><span style="letter-spacing:-0.25px">Set</span><span style="letter-spacing:-0.02px"> </span><span style="letter-spacing:-0.24px">Transport</span><span style="letter-spacing:-0.02px"> </span><span style="letter-spacing:-0.03px">=</span><span style="letter-spacing:-0.02px"> </span><span style="letter-spacing:-0.26px">(</span><span style="letter-spacing:-0.18px">Last</span><span style="letter-spacing:-0.02px"> </span><span style="letter-spacing:-0.21px">created</span><span style="letter-spacing:-0.02px"> </span><span style="letter-spacing:-0.24px">unit</span><span style="letter-spacing:-0.26px">)</span></div><svg class="ic" style="left:500px;top:205px"><use href="#i-unit"/></svg><div class="t" style="left:521px;top:205px;color:#8e008e"><span style="letter-spacing:-0.25px">Unit</span><span style="letter-spacing:-0.02px"> </span><span style="letter-spacing:-0.71px">-</span><span style="letter-spacing:-0.02px"> </span><span style="letter-spacing:-0.25px">Set</span><span style="letter-spacing:-0.02px"> </span><span style="letter-spacing:-0.24px">Transport</span><span style="letter-spacing:-0.02px"> </span><span style="letter-spacing:-0.38px">team</span><span style="letter-spacing:-0.02px"> </span><span style="letter-spacing:-0.28px">color</span><span style="letter-spacing:-0.02px"> </span><span style="letter-spacing:-0.24px">to</span><span style="letter-spacing:-0.02px"> </span><span style="letter-spacing:-0.26px">(</span><span style="letter-spacing:-0.34px">Current</span><span style="letter-spacing:-0.02px"> </span><span style="letter-spacing:-0.36px">player</span><span style="letter-spacing:-0.02px"> </span><span style="letter-spacing:-0.09px">P2</span><span style="letter-spacing:-0.13px">_</span><span style="letter-spacing:-0.19px">COMPUTER</span><span style="letter-spacing:-0.02px"> </span><span style="letter-spacing:-0.28px">color</span><span style="letter-spacing:-0.26px">)</span></div><svg class="ic" style="left:500px;top:221px"><use href="#i-unit"/></svg><div class="t" style="left:521px;top:221px;color:#8e008e"><span style="letter-spacing:-0.25px">Unit</span><span style="letter-spacing:-0.02px"> </span><span style="letter-spacing:-0.71px">-</span><span style="letter-spacing:-0.02px"> </span><span style="letter-spacing:-0.31px">Share</span><span style="letter-spacing:-0.02px"> </span><span style="letter-spacing:-0.32px">Vision</span><span style="letter-spacing:-0.02px"> </span><span style="letter-spacing:-0.05px">of</span><span style="letter-spacing:-0.02px"> </span><span style="letter-spacing:-0.24px">Transport</span><span style="letter-spacing:-0.02px"> </span><span style="letter-spacing:-0.10px">with</span><span style="letter-spacing:-0.02px"> </span><span style="letter-spacing:-0.34px">Player</span><span style="letter-spacing:-0.02px"> </span><span style="letter-spacing:-0.15px">P1</span><span style="letter-spacing:-0.13px">_</span><span style="letter-spacing:-0.29px">USER</span></div><svg class="ic" style="left:500px;top:237px"><use href="#i-unit"/></svg><div class="t" style="left:521px;top:237px;color:#8e008e"><span style="letter-spacing:-0.25px">Unit</span><span style="letter-spacing:-0.02px"> </span><span style="letter-spacing:-0.71px">-</span><span style="letter-spacing:-0.02px"> </span><span style="letter-spacing:-0.07px">Turn</span><span style="letter-spacing:-0.02px"> </span><span style="letter-spacing:-0.24px">Transport</span><span style="letter-spacing:-0.02px"> </span><span style="letter-spacing:-0.15px">Selectable</span><span style="letter-spacing:-0.02px"> </span><span style="letter-spacing:-0.22px">state</span><span style="letter-spacing:-0.02px"> </span><span style="letter-spacing:0.16px">Off</span></div><svg class="ic" style="left:500px;top:253px"><use href="#i-unit"/></svg><div class="t" style="left:521px;top:253px;color:#8e008e"><span style="letter-spacing:-0.25px">Unit</span><span style="letter-spacing:-0.02px"> </span><span style="letter-spacing:-0.71px">-</span><span style="letter-spacing:-0.02px"> </span><span style="letter-spacing:-0.07px">Turn</span><span style="letter-spacing:-0.02px"> </span><span style="letter-spacing:-0.24px">Transport</span><span style="letter-spacing:-0.02px"> </span><span style="letter-spacing:-0.12px">Targetable</span><span style="letter-spacing:-0.02px"> </span><span style="letter-spacing:-0.22px">state</span><span style="letter-spacing:-0.02px"> </span><span style="letter-spacing:0.16px">Off</span></div><svg class="ic" style="left:500px;top:269px"><use href="#i-unit"/></svg><div class="t" style="left:521px;top:269px;color:#8e008e"><span style="letter-spacing:-0.25px">Unit</span><span style="letter-spacing:-0.02px"> </span><span style="letter-spacing:-0.71px">-</span><span style="letter-spacing:-0.02px"> </span><span style="letter-spacing:-0.07px">Turn</span><span style="letter-spacing:-0.02px"> </span><span style="letter-spacing:-0.24px">Transport</span><span style="letter-spacing:-0.02px"> </span><span style="letter-spacing:-0.25px">Stoppable</span><span style="letter-spacing:-0.02px"> </span><span style="letter-spacing:-0.22px">state</span><span style="letter-spacing:-0.02px"> </span><span style="letter-spacing:0.16px">Off</span></div><svg class="ic" style="left:500px;top:285px"><use href="#i-unit"/></svg><div class="t" style="left:521px;top:285px;color:#8e008e"><span style="letter-spacing:-0.25px">Unit</span><span style="letter-spacing:-0.02px"> </span><span style="letter-spacing:-0.71px">-</span><span style="letter-spacing:-0.02px"> </span><span style="letter-spacing:-0.07px">Turn</span><span style="letter-spacing:-0.02px"> </span><span style="letter-spacing:-0.24px">Transport</span><span style="letter-spacing:-0.02px"> </span><span style="letter-spacing:-0.29px">Status</span><span style="letter-spacing:-0.02px"> </span><span style="letter-spacing:-0.36px">Bar</span><span style="letter-spacing:-0.02px"> </span><span style="letter-spacing:-0.22px">state</span><span style="letter-spacing:-0.02px"> </span><span style="letter-spacing:0.16px">Off</span></div><svg class="ic" style="left:500px;top:301px"><use href="#i-camera"/></svg><div class="t" style="left:521px;top:301px;color:#000000"><span style="letter-spacing:-0.52px">Camera</span><span style="letter-spacing:-0.02px"> </span><span style="letter-spacing:-0.71px">-</span><span style="letter-spacing:-0.02px"> </span><span style="letter-spacing:-0.27px">Pan</span><span style="letter-spacing:-0.02px"> </span><span style="letter-spacing:-0.00px">the</span><span style="letter-spacing:-0.02px"> </span><span style="letter-spacing:-0.37px">camera</span><span style="letter-spacing:-0.02px"> </span><span style="letter-spacing:-0.21px">for</span><span style="letter-spacing:-0.02px"> </span><span style="letter-spacing:-0.36px">player</span><span style="letter-spacing:-0.02px"> </span><span style="letter-spacing:-0.15px">P1</span><span style="letter-spacing:-0.13px">_</span><span style="letter-spacing:-0.29px">USER</span><span style="letter-spacing:-0.02px"> </span><span style="letter-spacing:-0.24px">to</span><span style="letter-spacing:-0.02px"> </span><span style="letter-spacing:-0.32px">Spawn</span><span style="letter-spacing:-0.02px"> </span><span style="letter-spacing:-0.28px">Dropship</span><span style="letter-spacing:-0.02px"> </span><span style="letter-spacing:-0.47px">over</span><span style="letter-spacing:-0.02px"> </span><span style="letter-spacing:0.02px">0</span><span style="letter-spacing:0.11px">.</span><span style="letter-spacing:0.02px">0</span><span style="letter-spacing:-0.02px"> </span><span style="letter-spacing:-0.30px">seconds</span><span style="letter-spacing:-0.02px"> </span><span style="letter-spacing:-0.10px">with</span><span style="letter-spacing:-0.02px"> </span><span style="letter-spacing:-0.27px">Existing</span><span style="letter-spacing:-0.02px"> </span><span style="letter-spacing:-0.16px">Velocity</span><span style="letter-spacing:-0.17px">%</span><span style="letter-spacing:-0.02px"> </span><span style="letter-spacing:-0.30px">initial</span><span style="letter-spacing:-0.02px"> </span><span style="letter-spacing:-0.27px">velocity</span><span style="letter-spacing:0.18px">,</span><span style="letter-spacing:-0.02px"> </span><span style="letter-spacing:-0.04px">10</span><span style="letter-spacing:0.11px">.</span><span style="letter-spacing:0.02px">0</span><span style="letter-spacing:-0.17px">%</span><span style="letter-spacing:-0.02px"> </span><span style="letter-spacing:-0.25px">deceleration</span><span style="letter-spacing:0.18px">,</span><span style="letter-spacing:-0.02px"> </span><span style="letter-spacing:-0.34px">and</span><span style="letter-spacing:-0.02px"> </span><span style="letter-spacing:-0.21px">Do</span><span style="letter-spacing:-0.02px"> </span><span style="letter-spacing:-0.20px">Not</span><span style="letter-spacing:-0.02px"> </span><span style="letter-spacing:-0.36px">use</span><span style="letter-spacing:-0.02px"> </span><span style="letter-spacing:-0.46px">smart</span><span style="letter-spacing:-0.02px"> </span><span style="letter-spacing:-0.28px">panning</span></div><svg class="ic" style="left:500px;top:317px"><use href="#i-camera"/></svg><div class="t" style="left:521px;top:317px;color:#000000"><span style="letter-spacing:-0.52px">Camera</span><span style="letter-spacing:-0.02px"> </span><span style="letter-spacing:-0.71px">-</span><span style="letter-spacing:-0.02px"> </span><span style="letter-spacing:-0.03px">Lock</span><span style="letter-spacing:-0.02px"> </span><span style="letter-spacing:-0.37px">camera</span><span style="letter-spacing:-0.02px"> </span><span style="letter-spacing:-0.25px">input</span><span style="letter-spacing:-0.02px"> </span><span style="letter-spacing:-0.21px">for</span><span style="letter-spacing:-0.02px"> </span><span style="letter-spacing:-0.36px">player</span><span style="letter-spacing:-0.02px"> </span><span style="letter-spacing:-0.11px">1</span></div><svg class="ic" style="left:500px;top:333px"><use href="#i-unit"/></svg><div class="t" style="left:521px;top:333px;color:#8e008e"><span style="letter-spacing:-0.25px">Unit</span><span style="letter-spacing:-0.02px"> </span><span style="letter-spacing:-0.71px">-</span><span style="letter-spacing:-0.02px"> </span><span style="letter-spacing:-0.41px">Order</span><span style="letter-spacing:-0.02px"> </span><span style="letter-spacing:-0.24px">Transport</span><span style="letter-spacing:-0.02px"> </span><span style="letter-spacing:-0.24px">to</span><span style="letter-spacing:-0.02px"> </span><span style="letter-spacing:-0.26px">(</span><span style="letter-spacing:-0.27px">Hercules</span><span style="letter-spacing:-0.02px"> </span><span style="letter-spacing:-0.71px">-</span><span style="letter-spacing:-0.02px"> </span><span style="letter-spacing:-0.22px">Land</span><span style="letter-spacing:-0.02px"> </span><span style="letter-spacing:-0.26px">(</span><span style="letter-spacing:-0.27px">Hercules</span><span style="letter-spacing:-0.26px">)</span><span style="letter-spacing:-0.02px"> </span><span style="letter-spacing:-0.24px">targeting</span><span style="letter-spacing:-0.02px"> </span><span style="letter-spacing:-0.22px">Land</span><span style="letter-spacing:-0.02px"> </span><span style="letter-spacing:-0.28px">Dropship</span><span style="letter-spacing:-0.26px">)</span><span style="letter-spacing:-0.02px"> </span><span style="letter-spacing:-0.26px">(</span><span style="letter-spacing:-0.16px">Replace</span><span style="letter-spacing:-0.02px"> </span><span style="letter-spacing:-0.27px">Existing</span><span style="letter-spacing:-0.02px"> </span><span style="letter-spacing:-0.42px">Orders</span><span style="letter-spacing:-0.26px">)</span></div><svg class="ic" style="left:500px;top:349px"><use href="#i-general"/></svg><div class="t" style="left:521px;top:349px;color:#1a84ff"><span style="letter-spacing:-0.28px">General</span><span style="letter-spacing:-0.02px"> </span><span style="letter-spacing:-0.71px">-</span><span style="letter-spacing:-0.02px"> </span><span style="letter-spacing:-0.13px">Wait</span><span style="letter-spacing:-0.02px"> </span><span style="letter-spacing:0.01px">2</span><span style="letter-spacing:0.11px">.</span><span style="letter-spacing:0.02px">0</span><span style="letter-spacing:-0.02px"> </span><span style="letter-spacing:-0.44px">Game</span><span style="letter-spacing:-0.02px"> </span><span style="letter-spacing:-0.21px">Time</span><span style="letter-spacing:-0.02px"> </span><span style="letter-spacing:-0.30px">seconds</span></div><svg class="ic" style="left:500px;top:365px"><use href="#i-camera"/></svg><div class="t" style="left:521px;top:365px;color:#000000"><span style="letter-spacing:-0.52px">Camera</span><span style="letter-spacing:-0.02px"> </span><span style="letter-spacing:-0.71px">-</span><span style="letter-spacing:-0.02px"> </span><span style="letter-spacing:-0.30px">Restore</span><span style="letter-spacing:-0.02px"> </span><span style="letter-spacing:-0.00px">the</span><span style="letter-spacing:-0.02px"> </span><span style="letter-spacing:-0.43px">saved</span><span style="letter-spacing:-0.02px"> </span><span style="letter-spacing:-0.37px">camera</span><span style="letter-spacing:-0.02px"> </span><span style="letter-spacing:-0.26px">settings</span><span style="letter-spacing:-0.02px"> </span><span style="letter-spacing:-0.21px">for</span><span style="letter-spacing:-0.02px"> </span><span style="letter-spacing:-0.36px">player</span><span style="letter-spacing:-0.02px"> </span><span style="letter-spacing:-0.11px">1</span><span style="letter-spacing:-0.02px"> </span><span style="letter-spacing:-0.47px">over</span><span style="letter-spacing:-0.02px"> </span><span style="letter-spacing:0.02px">0</span><span style="letter-spacing:0.11px">.</span><span style="letter-spacing:0.02px">0</span><span style="letter-spacing:-0.02px"> </span><span style="letter-spacing:-0.30px">seconds</span><span style="letter-spacing:-0.02px"> </span><span style="letter-spacing:-0.10px">with</span><span style="letter-spacing:-0.02px"> </span><span style="letter-spacing:-0.27px">Existing</span><span style="letter-spacing:-0.02px"> </span><span style="letter-spacing:-0.16px">Velocity</span><span style="letter-spacing:-0.17px">%</span><span style="letter-spacing:-0.02px"> </span><span style="letter-spacing:-0.30px">initial</span><span style="letter-spacing:-0.02px"> </span><span style="letter-spacing:-0.27px">velocity</span><span style="letter-spacing:-0.02px"> </span><span style="letter-spacing:-0.34px">and</span><span style="letter-spacing:-0.02px"> </span><span style="letter-spacing:-0.04px">10</span><span style="letter-spacing:0.11px">.</span><span style="letter-spacing:0.02px">0</span><span style="letter-spacing:-0.17px">%</span><span style="letter-spacing:-0.02px"> </span><span style="letter-spacing:-0.25px">deceleration</span></div><svg class="ic" style="left:500px;top:381px"><use href="#i-camera"/></svg><div class="t" style="left:521px;top:381px;color:#000000"><span style="letter-spacing:-0.52px">Camera</span><span style="letter-spacing:-0.02px"> </span><span style="letter-spacing:-0.71px">-</span><span style="letter-spacing:-0.02px"> </span><span style="letter-spacing:-0.17px">Unlock</span><span style="letter-spacing:-0.02px"> </span><span style="letter-spacing:-0.37px">camera</span><span style="letter-spacing:-0.02px"> </span><span style="letter-spacing:-0.25px">input</span><span style="letter-spacing:-0.02px"> </span><span style="letter-spacing:-0.21px">for</span><span style="letter-spacing:-0.02px"> </span><span style="letter-spacing:-0.36px">player</span><span style="letter-spacing:-0.02px"> </span><span style="letter-spacing:-0.11px">1</span></div><svg class="ic" style="left:500px;top:397px"><use href="#i-comment"/></svg><div class="t t2" style="left:521px;top:397px;color:#008000"><span style="letter-spacing:1.82px;margin-left:0.91px;margin-right:-0.91px">//</span><span style="letter-spacing:-0.02px"> </span><span style="letter-spacing:-0.13px">Вот</span><span style="letter-spacing:-0.02px"> </span><span style="letter-spacing:0.02px">это</span><span style="letter-spacing:-0.02px"> </span><span style="letter-spacing:-0.01px">действие</span><span style="letter-spacing:-0.02px"> </span><span style="letter-spacing:-0.06px">ниже</span><span style="letter-spacing:-0.02px"> </span><span style="letter-spacing:0.03px">сообщения</span><span style="letter-spacing:-0.02px"> </span><span style="letter-spacing:0.71px">&quot;</span><span style="letter-spacing:-0.35px">Send</span><span style="letter-spacing:-0.02px"> </span><span style="letter-spacing:-0.37px">Transmission</span><span style="letter-spacing:-0.02px"> </span><span style="letter-spacing:-0.26px">(</span><span style="letter-spacing:-0.44px">Campaign</span><span style="letter-spacing:-0.26px">)</span><span style="letter-spacing:0.71px">&quot;</span><span style="letter-spacing:-0.02px"> </span><span style="letter-spacing:-0.01px">будет</span><span style="letter-spacing:-0.02px"> </span><span style="letter-spacing:0.18px">только</span><span style="letter-spacing:-0.02px"> </span><span style="letter-spacing:0.09px">если</span><span style="letter-spacing:-0.02px"> </span><span style="letter-spacing:0.02px">подключить</span><span style="letter-spacing:-0.02px"> </span><span style="letter-spacing:-0.04px">стандартную</span><span style="letter-spacing:-0.02px"> </span><span style="letter-spacing:0.08px">библиотеку</span><span style="letter-spacing:-0.02px"> </span><span style="letter-spacing:0.71px">&quot;</span><span style="letter-spacing:-0.12px">Сюжет</span><span style="letter-spacing:0.71px">&quot;</span><span style="letter-spacing:-0.02px"> </span><span style="letter-spacing:-0.26px">(</span><span style="letter-spacing:0.01px">любую</span><span style="letter-spacing:-0.02px"> </span><span style="letter-spacing:-0.01px">из</span><span style="letter-spacing:-0.02px"> </span><span style="letter-spacing:0.11px">версий</span><span style="letter-spacing:-0.26px">)</span><br><span style="letter-spacing:1.82px;margin-left:0.91px;margin-right:-0.91px">//</span><span style="letter-spacing:-0.02px"> </span><span style="letter-spacing:-0.02px">Подключаются</span><span style="letter-spacing:-0.02px"> </span><span style="letter-spacing:0.05px">библиотеки</span><span style="letter-spacing:-0.02px"> </span><span style="letter-spacing:0.16px">через</span><span style="letter-spacing:-0.02px"> </span><span style="letter-spacing:0.20px">вкладку</span><span style="letter-spacing:-0.02px"> </span><span style="letter-spacing:0.71px">&quot;</span><span style="letter-spacing:-0.07px">Файл</span><span style="letter-spacing:-0.02px"> </span><span style="letter-spacing:-0.71px">-</span><span style="letter-spacing:-0.02px"> </span><span style="letter-spacing:0.01px">Библиотеки</span><span style="letter-spacing:-0.02px"> </span><span style="letter-spacing:0.21px">ресурсов</span><span style="letter-spacing:-0.02px"> </span><span style="letter-spacing:-0.71px">-</span><span style="letter-spacing:-0.02px"> </span><span style="letter-spacing:-0.16px">Стандартная</span><span style="letter-spacing:-0.02px"> </span><span style="letter-spacing:-0.71px">-</span><span style="letter-spacing:-0.02px"> </span><span style="letter-spacing:0.02px">поставить</span><span style="letter-spacing:-0.02px"> </span><span style="letter-spacing:0.21px">галочку</span><span style="letter-spacing:-0.02px"> </span><span style="letter-spacing:-0.14px">на</span><span style="letter-spacing:-0.02px"> </span><span style="letter-spacing:0.07px">сюжетных</span><span style="letter-spacing:-0.02px"> </span><span style="letter-spacing:0.07px">библиотеках</span><span style="letter-spacing:0.71px">&quot;</span></div><svg class="ic" style="left:500px;top:429px"><use href="#i-comment"/></svg><div class="t t2" style="left:521px;top:429px;color:#008000"><span style="letter-spacing:1.82px;margin-left:0.91px;margin-right:-0.91px">//</span><span style="letter-spacing:-0.02px"> </span><span style="letter-spacing:-0.24px">Информация</span><span style="letter-spacing:-0.02px"> </span><span style="letter-spacing:-0.25px">о</span><span style="letter-spacing:-0.02px"> </span><span style="letter-spacing:0.28px">тексте</span><span style="letter-spacing:-0.02px"> </span><span style="letter-spacing:0.08px">субитров</span><span style="letter-spacing:-0.02px"> </span><span style="letter-spacing:0.10px">берётся</span><span style="letter-spacing:-0.02px"> </span><span style="letter-spacing:-0.01px">из</span><span style="letter-spacing:-0.02px"> </span><span style="letter-spacing:0.23px">звука</span><span style="letter-spacing:-0.02px"> </span><span style="letter-spacing:0.10px">в</span><span style="letter-spacing:-0.02px"> </span><span style="letter-spacing:0.71px">&quot;</span><span style="letter-spacing:-0.10px">Модуле</span><span style="letter-spacing:-0.02px"> </span><span style="letter-spacing:-0.11px">данных</span><span style="letter-spacing:-0.02px"> </span><span style="letter-spacing:-0.71px">-</span><span style="letter-spacing:-0.02px"> </span><span style="letter-spacing:0.38px">`</span><span style="letter-spacing:0.17px">+</span><span style="letter-spacing:0.38px">`</span><span style="letter-spacing:-0.02px"> </span><span style="letter-spacing:-0.71px">-</span><span style="letter-spacing:-0.02px"> </span><span style="letter-spacing:0.38px">`</span><span style="letter-spacing:-0.24px">Edit</span><span style="letter-spacing:-0.02px"> </span><span style="letter-spacing:-0.13px">Art</span><span style="letter-spacing:-0.02px"> </span><span style="letter-spacing:-0.34px">and</span><span style="letter-spacing:-0.02px"> </span><span style="letter-spacing:-0.40px">Sound</span><span style="letter-spacing:-0.02px"> </span><span style="letter-spacing:-0.17px">Data</span><span style="letter-spacing:0.38px">`</span><span style="letter-spacing:-0.02px"> </span><span style="letter-spacing:-0.71px">-</span><span style="letter-spacing:-0.02px"> </span><span style="letter-spacing:-0.42px">Sounds</span><span style="letter-spacing:-0.02px"> </span><span style="letter-spacing:0.71px">&quot;</span><span style="letter-spacing:-0.02px"> </span><span style="letter-spacing:0.10px">в</span><span style="letter-spacing:-0.02px"> </span><span style="letter-spacing:-0.06px">поле</span><span style="letter-spacing:-0.02px"> </span><span style="letter-spacing:0.71px">&quot;</span><span style="letter-spacing:-0.40px">Sound</span><span style="letter-spacing:-0.02px"> </span><span style="letter-spacing:-0.38px">Array</span><span style="letter-spacing:0.71px">&quot;</span><br><span style="letter-spacing:1.82px;margin-left:0.91px;margin-right:-0.91px">//</span><span style="letter-spacing:-0.02px"> </span><span style="letter-spacing:1.04px">к</span><span style="letter-spacing:-0.02px"> </span><span style="letter-spacing:-0.05px">каждому</span><span style="letter-spacing:-0.02px"> </span><span style="letter-spacing:0.04px">звуковому</span><span style="letter-spacing:-0.02px"> </span><span style="letter-spacing:-0.16px">файлу</span><span style="letter-spacing:-0.02px"> </span><span style="letter-spacing:-0.03px">прописаны</span><span style="letter-spacing:-0.02px"> </span><span style="letter-spacing:0.08px">субтитры</span><span style="letter-spacing:0.11px">.</span></div><svg class="ic" style="left:500px;top:461px"><use href="#i-transm"/></svg><div class="t" style="left:521px;top:461px;color:#000000"><span style="letter-spacing:-0.37px">Transmission</span><span style="letter-spacing:-0.02px"> </span><span style="letter-spacing:-0.71px">-</span><span style="letter-spacing:-0.02px"> </span><span style="letter-spacing:-0.35px">Send</span><span style="letter-spacing:-0.02px"> </span><span style="letter-spacing:-0.43px">transmission</span><span style="letter-spacing:-0.02px"> </span><span style="letter-spacing:-0.38px">from</span><span style="letter-spacing:-0.02px"> </span><span style="letter-spacing:-0.40px">Marine</span><span style="letter-spacing:-0.02px"> </span><span style="letter-spacing:0.06px">[</span><span style="letter-spacing:0.04px">70</span><span style="letter-spacing:0.11px">.</span><span style="letter-spacing:-0.13px">46</span><span style="letter-spacing:0.18px">,</span><span style="letter-spacing:-0.02px"> </span><span style="letter-spacing:-0.02px">79</span><span style="letter-spacing:0.11px">.</span><span style="letter-spacing:-0.21px">65</span><span style="letter-spacing:0.06px">]</span><span style="letter-spacing:-0.02px"> </span><span style="letter-spacing:-0.32px">playing</span><span style="letter-spacing:-0.02px"> </span><span style="letter-spacing:-0.10px">TTychus03Marine500019</span><span style="letter-spacing:-0.02px"> </span><span style="letter-spacing:-0.26px">(</span><span style="letter-spacing:-0.24px">Add</span><span style="letter-spacing:-0.02px"> </span><span style="letter-spacing:-0.11px">1</span><span style="letter-spacing:0.11px">.</span><span style="letter-spacing:-0.32px">5</span><span style="letter-spacing:-0.02px"> </span><span style="letter-spacing:-0.30px">seconds</span><span style="letter-spacing:0.18px">,</span><span style="letter-spacing:-0.02px"> </span><span style="letter-spacing:-0.13px">Wait</span><span style="letter-spacing:-0.02px"> </span><span style="letter-spacing:-0.22px">until</span><span style="letter-spacing:-0.02px"> </span><span style="letter-spacing:-0.20px">it</span><span style="letter-spacing:-0.02px"> </span><span style="letter-spacing:-0.22px">finishes</span><span style="letter-spacing:-0.26px">)</span></div><svg class="ic" style="left:500px;top:477px"><use href="#i-unit"/></svg><div class="t" style="left:521px;top:477px;color:#8e008e"><span style="letter-spacing:-0.25px">Unit</span><span style="letter-spacing:-0.02px"> </span><span style="letter-spacing:-0.71px">-</span><span style="letter-spacing:-0.02px"> </span><span style="letter-spacing:-0.41px">Order</span><span style="letter-spacing:-0.02px"> </span><span style="letter-spacing:-0.23px">all</span><span style="letter-spacing:-0.02px"> </span><span style="letter-spacing:-0.29px">units</span><span style="letter-spacing:-0.02px"> </span><span style="letter-spacing:-0.33px">in</span><span style="letter-spacing:-0.02px"> </span><span style="letter-spacing:-0.41px">Marines</span><span style="letter-spacing:-0.02px"> </span><span style="letter-spacing:-0.38px">Squad</span><span style="letter-spacing:-0.02px"> </span><span style="letter-spacing:-0.24px">to</span><span style="letter-spacing:-0.02px"> </span><span style="letter-spacing:-0.26px">(</span><span style="letter-spacing:-0.47px">Smart</span><span style="letter-spacing:-0.02px"> </span><span style="letter-spacing:-0.57px">Command</span><span style="letter-spacing:-0.02px"> </span><span style="letter-spacing:-0.24px">targeting</span><span style="letter-spacing:-0.02px"> </span><span style="letter-spacing:-0.24px">Transport</span><span style="letter-spacing:-0.26px">)</span><span style="letter-spacing:-0.02px"> </span><span style="letter-spacing:-0.26px">(</span><span style="letter-spacing:-0.16px">Replace</span><span style="letter-spacing:-0.02px"> </span><span style="letter-spacing:-0.27px">Existing</span><span style="letter-spacing:-0.02px"> </span><span style="letter-spacing:-0.42px">Orders</span><span style="letter-spacing:-0.26px">)</span></div><svg class="ic" style="left:500px;top:493px"><use href="#i-comment"/></svg><div class="t" style="left:521px;top:493px;color:#008000"><span style="letter-spacing:1.82px;margin-left:0.91px;margin-right:-0.91px">//</span><span style="letter-spacing:-0.02px"> </span><span style="letter-spacing:0.02px">Включаем</span><span style="letter-spacing:-0.02px"> </span><span style="letter-spacing:0.28px">погрузку</span><span style="letter-spacing:-0.02px"> </span><span style="letter-spacing:0.10px">в</span><span style="letter-spacing:-0.02px"> </span><span style="letter-spacing:0.05px">транспорт</span><span style="letter-spacing:0.18px">,</span><span style="letter-spacing:-0.02px"> </span><span style="letter-spacing:0.23px">так</span><span style="letter-spacing:-0.02px"> </span><span style="letter-spacing:0.60px">как</span><span style="letter-spacing:-0.02px"> </span><span style="letter-spacing:0.18px">только</span><span style="letter-spacing:-0.02px"> </span><span style="letter-spacing:0.17px">сейчас</span><span style="letter-spacing:-0.02px"> </span><span style="letter-spacing:-0.18px">она</span><span style="letter-spacing:-0.02px"> </span><span style="letter-spacing:-0.25px">нам</span><span style="letter-spacing:-0.02px"> </span><span style="letter-spacing:-0.02px">понадобилась</span></div><svg class="ic" style="left:500px;top:509px"><use href="#i-trigger"/></svg><div class="t" style="left:521px;top:509px;color:#1a84ff"><span style="letter-spacing:-0.19px">Trigger</span><span style="letter-spacing:-0.02px"> </span><span style="letter-spacing:-0.71px">-</span><span style="letter-spacing:-0.02px"> </span><span style="letter-spacing:-0.07px">Turn</span><span style="letter-spacing:-0.02px"> </span><span style="letter-spacing:0.20px">Загрузиться</span><span style="letter-spacing:-0.02px"> </span><span style="letter-spacing:0.10px">в</span><span style="letter-spacing:-0.02px"> </span><span style="letter-spacing:0.05px">транспорт</span><span style="letter-spacing:-0.02px"> </span><span style="letter-spacing:-0.29px">On</span></div><svg class="ic" style="left:500px;top:525px"><use href="#i-trigger"/></svg><div class="t" style="left:521px;top:525px;color:#1a84ff"><span style="letter-spacing:-0.19px">Trigger</span><span style="letter-spacing:-0.02px"> </span><span style="letter-spacing:-0.71px">-</span><span style="letter-spacing:-0.02px"> </span><span style="letter-spacing:-0.22px">Run</span><span style="letter-spacing:-0.02px"> </span><span style="letter-spacing:-0.09px">Init</span><span style="letter-spacing:-0.02px"> </span><span style="letter-spacing:-0.18px">Objective</span><span style="letter-spacing:-0.02px"> </span><span style="letter-spacing:-0.71px">-</span><span style="letter-spacing:-0.02px"> </span><span style="letter-spacing:-0.24px">Transport</span><span style="letter-spacing:-0.02px">  </span><span style="letter-spacing:-0.26px">(</span><span style="letter-spacing:-0.08px">Check</span><span style="letter-spacing:-0.02px"> </span><span style="letter-spacing:-0.38px">Conditions</span><span style="letter-spacing:0.18px">,</span><span style="letter-spacing:-0.02px"> </span><span style="letter-spacing:-0.21px">Don</span><span style="letter-spacing:0.25px">’</span><span style="letter-spacing:0.04px">t</span><span style="letter-spacing:-0.02px"> </span><span style="letter-spacing:-0.13px">Wait</span><span style="letter-spacing:-0.02px"> </span><span style="letter-spacing:-0.22px">until</span><span style="letter-spacing:-0.02px"> </span><span style="letter-spacing:-0.20px">it</span><span style="letter-spacing:-0.02px"> </span><span style="letter-spacing:-0.22px">finishes</span><span style="letter-spacing:-0.26px">)</span></div></div></div><div class="sb" style="left:459px;top:680px;width:834px;height:16px"></div><div class="thumb" style="left:476px;top:680px;width:758px;height:15px"></div><svg class="abs" style="left:463px;top:684px" width="8" height="8"><path d="M6.2 0.9 L2.8 4 L6.2 7.1" fill="none" stroke="#606060" stroke-width="2.3"/></svg><svg class="abs" style="left:1281px;top:684px" width="8" height="8"><path d="M1.8 0.9 L5.2 4 L1.8 7.1" fill="none" stroke="#606060" stroke-width="2.3"/></svg></body></html>
